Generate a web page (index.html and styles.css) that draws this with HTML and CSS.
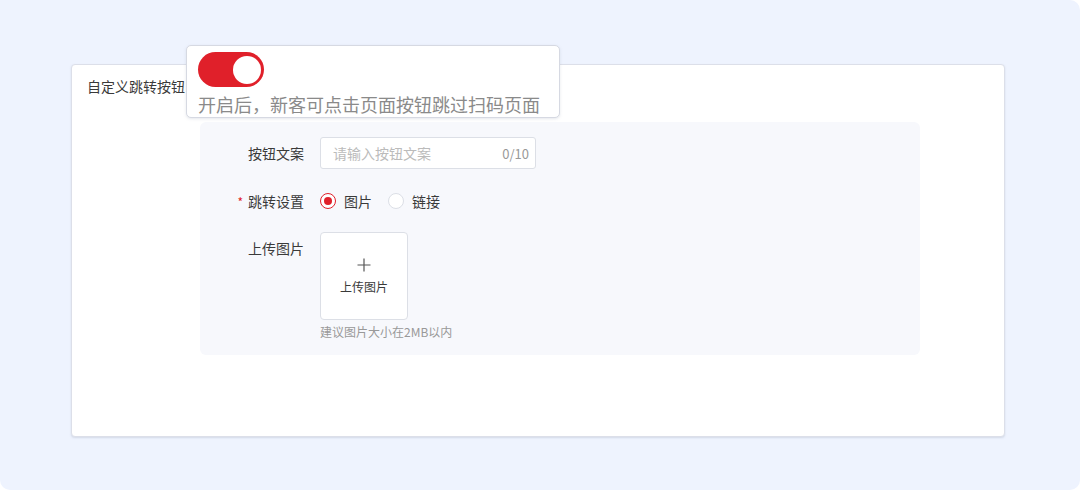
FILE: index.html
```html
<!DOCTYPE html>
<html lang="zh">
<head>
<meta charset="utf-8">
<link rel="stylesheet" href="styles.css">
</head>
<body>
<div class="bg">
  <div class="card">
    <div class="title">自定义跳转按钮</div>
    <div class="pop">
      <div class="switch"><span class="knob"></span></div>
      <div class="pop-text">开启后，新客可点击页面按钮跳过扫码页面</div>
    </div>
    <div class="panel">
      <div class="row r1">
        <div class="label">按钮文案</div>
        <div class="input">
          <span class="ph">请输入按钮文案</span>
          <span class="count">0/10</span>
        </div>
      </div>
      <div class="row r2">
        <div class="label"><span class="req">*</span>跳转设置</div>
        <div class="radios">
          <span class="radio on"><i></i></span><span class="rtext">图片</span>
          <span class="radio"></span><span class="rtext">链接</span>
        </div>
      </div>
      <div class="row r3">
        <div class="label">上传图片</div>
        <div class="upcol">
          <div class="upload">
            <svg width="14" height="14" viewBox="0 0 14 14"><path d="M7 0.5V13.5M0.5 7H13.5" stroke="#555" stroke-width="1.2" fill="none"/></svg>
            <span class="uptext">上传图片</span>
          </div>
          <div class="hint">建议图片大小在2MB以内</div>
        </div>
      </div>
    </div>
  </div>
</div>
</body>
</html>
```

FILE: styles.css
```css
html, body {
  margin: 0;
  padding: 0;
  background: #ffffff;
  font-family: "Noto Sans CJK SC", "Noto Sans", sans-serif;
}
.bg {
  width: 1080px;
  height: 490px;
  background: #eef3fe;
  border-radius: 0 10px 10px 10px;
  padding: 64px 0 0 71px;
  box-sizing: border-box;
}
.card {
  position: relative;
  width: 934px;
  height: 373px;
  box-sizing: border-box;
  background: #fff;
  border: 1px solid #dcdfe9;
  border-radius: 4px;
  box-shadow: 0 1px 2px rgba(160, 170, 190, 0.35);
  padding: 10px 16px 0 15px;
}
.title {
  font-size: 14px;
  line-height: 22px;
  color: #3a3a3a;
}
.pop {
  position: absolute;
  left: 114px;
  top: -20px;
  width: 374px;
  height: 73px;
  box-sizing: border-box;
  background: #fff;
  border: 1px solid #d6d9e2;
  border-radius: 5px;
  box-shadow: 0 1px 3px rgba(150, 160, 180, 0.25);
  padding: 6px 0 0 11px;
}
.switch {
  width: 66px;
  height: 35px;
  border-radius: 18px;
  background: #e0202a;
  display: flex;
  align-items: center;
  justify-content: flex-end;
  padding-right: 3px;
  box-sizing: border-box;
}
.knob {
  width: 28px;
  height: 28px;
  border-radius: 50%;
  background: #fff;
}
.pop-text {
  font-size: 18px;
  line-height: 24px;
  color: #8a8a8a;
  margin-top: 5px;
}
.panel {
  width: 720px;
  height: 233px;
  box-sizing: border-box;
  margin: 25px 0 0 113px;
  background: #f7f8fc;
  border-radius: 6px;
  padding-top: 15px;
}
.row {
  display: flex;
  align-items: flex-start;
  gap: 16px;
}
.r1 { margin-bottom: 16px; }
.r2 { margin-bottom: 14px; }
.label {
  width: 104px;
  text-align: right;
  font-size: 14px;
  line-height: 32px;
  color: #3a3a3a;
}
.req {
  color: #e0202a;
  margin-right: 5px;
  font-size: 12px;
}
.input {
  width: 216px;
  height: 32px;
  box-sizing: border-box;
  border: 1px solid #dcdfe6;
  border-radius: 3px;
  background: #fff;
  display: flex;
  align-items: center;
  justify-content: space-between;
  padding: 0 6px 0 12px;
  font-size: 14px;
}
.ph { color: #bbbbbb; }
.count { color: #999; font-size: 13px; }
.radios {
  display: flex;
  align-items: center;
  height: 32px;
}
.radio {
  width: 16px;
  height: 16px;
  box-sizing: border-box;
  border-radius: 50%;
  border: 1px solid #dcdfe6;
  background: #fff;
  display: flex;
  align-items: center;
  justify-content: center;
}
.radio.on { border: 1.5px solid #e0202a; }
.radio.on i {
  width: 8px;
  height: 8px;
  border-radius: 50%;
  background: #e0202a;
}
.rtext {
  font-size: 14px;
  color: #3a3a3a;
  margin: 0 16px 0 8px;
}
.upload {
  width: 88px;
  height: 88px;
  box-sizing: border-box;
  border: 1px solid #dcdfe6;
  border-radius: 4px;
  background: #fff;
  display: flex;
  flex-direction: column;
  align-items: center;
  padding-top: 25px;
  gap: 7px;
}
.uptext {
  font-size: 12px;
  line-height: 16px;
  color: #3a3a3a;
}
.hint {
  margin-top: 3px;
  font-size: 12px;
  line-height: 18px;
  color: #999;
}
```
